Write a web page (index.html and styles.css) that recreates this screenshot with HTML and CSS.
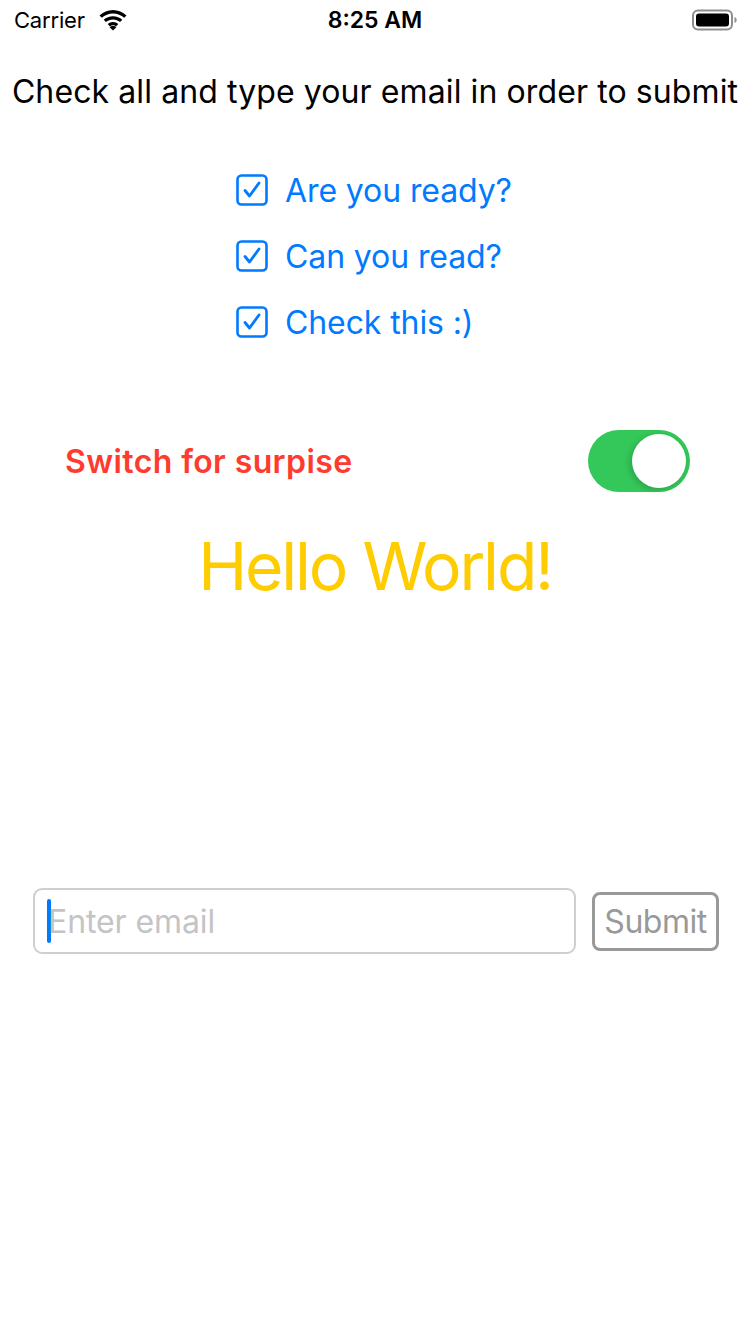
FILE: index.html
```html
<!DOCTYPE html>
<html>
<head>
<meta charset="utf-8">
<link rel="stylesheet" href="styles.css">
</head>
<body>
<div class="screen">
  <div class="status">
    <div class="status-left">
      <span class="carrier">Carrier</span>
      <svg class="wifi" width="30" height="22" viewBox="0 0 30 22">
        <path d="M15 4.5c4.3 0 8.2 1.6 11.2 4.3l2.3-2.4C24.9 3.1 20.2 1 15 1S5.1 3.1 1.5 6.4l2.3 2.4C6.8 6.1 10.7 4.5 15 4.5z" fill="#000"/>
        <path d="M15 10.5c2.7 0 5.1 1 7 2.6l2.3-2.4C21.8 8.5 18.6 7.2 15 7.2s-6.8 1.3-9.3 3.5L8 13.1c1.9-1.6 4.3-2.6 7-2.6z" fill="#000"/>
        <path d="M15 16.3c1.2 0 2.2.4 3 1.1l2.3-2.4c-1.4-1.3-3.3-2-5.3-2s-3.9.7-5.3 2l2.3 2.4c.8-.7 1.8-1.1 3-1.1z" fill="#000"/>
        <path d="M11.6 18.2L15 21.5l3.4-3.3c-.9-.8-2.1-1.3-3.4-1.3s-2.5.5-3.4 1.3z" fill="#000"/>
      </svg>
    </div>
    <div class="time">8:25 AM</div>
    <div class="status-right">
      <svg width="46" height="22" viewBox="0 0 46 22">
        <rect x="1" y="1.5" width="39" height="19" rx="5" fill="none" stroke="#8e8e8e" stroke-width="2"/>
        <rect x="4" y="4.5" width="33" height="13" rx="3" fill="#000"/>
        <path d="M42.5 8v6c1.3-.4 2.2-1.6 2.2-3s-.9-2.6-2.2-3z" fill="#8e8e8e"/>
      </svg>
    </div>
  </div>

  <div class="title">Check all and type your email in order to submit</div>

  <div class="checks">
    <div class="check-row">
      <svg class="box" width="32" height="32" viewBox="0 0 32 32"><rect x="1.5" y="1.5" width="29" height="29" rx="4" fill="none" stroke="#007aff" stroke-width="2.6"/><path d="M9 16.5l4.5 5.5L23 9" fill="none" stroke="#007aff" stroke-width="2.8" stroke-linecap="round" stroke-linejoin="round"/></svg>
      <span class="check-label">Are you ready?</span>
    </div>
    <div class="check-row">
      <svg class="box" width="32" height="32" viewBox="0 0 32 32"><rect x="1.5" y="1.5" width="29" height="29" rx="4" fill="none" stroke="#007aff" stroke-width="2.6"/><path d="M9 16.5l4.5 5.5L23 9" fill="none" stroke="#007aff" stroke-width="2.8" stroke-linecap="round" stroke-linejoin="round"/></svg>
      <span class="check-label">Can you read?</span>
    </div>
    <div class="check-row">
      <svg class="box" width="32" height="32" viewBox="0 0 32 32"><rect x="1.5" y="1.5" width="29" height="29" rx="4" fill="none" stroke="#007aff" stroke-width="2.6"/><path d="M9 16.5l4.5 5.5L23 9" fill="none" stroke="#007aff" stroke-width="2.8" stroke-linecap="round" stroke-linejoin="round"/></svg>
      <span class="check-label">Check this :)</span>
    </div>
  </div>

  <div class="switch-row">
    <span class="switch-label">Switch for surpise</span>
    <div class="switch"><div class="thumb"></div></div>
  </div>

  <div class="hello">Hello World!</div>

  <div class="form">
    <div class="input">
      <span class="cursor"></span>
      <span class="placeholder">Enter email</span>
    </div>
    <div class="submit">Submit</div>
  </div>
</div>
</body>
</html>
```

FILE: styles.css
```css
* { box-sizing: border-box; }
html, body { margin: 0; padding: 0; background: #fff; }
body {
  font-family: Inter, "Liberation Sans", sans-serif;
  width: 750px;
  height: 1334px;
  overflow: hidden;
}
.screen { display: flex; flex-direction: column; }

.status {
  height: 40px;
  display: flex;
  align-items: center;
  justify-content: space-between;
  padding: 0 12px 0 14px;
  position: relative;
}
.status-left { display: flex; align-items: center; gap: 13px; }
.carrier { font-size: 22px; color: #000; letter-spacing: -0.2px; }
.wifi { margin-top: -1px; }
.time {
  position: absolute;
  left: 0; right: 0;
  text-align: center;
  font-size: 23px;
  font-weight: 600;
  color: #000;
  pointer-events: none;
}
.status-right { display: flex; align-items: center; }

.title {
  margin-top: 32px;
  text-align: center;
  font-size: 32px;
  color: #000;
  letter-spacing: 0.1px;
  white-space: nowrap;
  line-height: 40px;
}

.checks {
  margin-top: 62px;
  display: flex;
  flex-direction: column;
  align-items: flex-start;
  gap: 34px;
  padding-left: 236px;
}
.check-row { display: flex; align-items: center; gap: 17px; height: 32px; }
.check-label { font-size: 32px; color: #007aff; letter-spacing: -0.1px; }

.switch-row {
  margin-top: 92px;
  display: flex;
  align-items: center;
  justify-content: space-between;
  padding: 0 60px 0 65px;
}
.switch-label { font-size: 32px; font-weight: 600; color: #ff3b30; letter-spacing: 0.4px; }
.switch {
  width: 102px;
  height: 62px;
  border-radius: 31px;
  background: #34c759;
  display: flex;
  align-items: center;
  justify-content: flex-end;
  padding-right: 4px;
}
.thumb {
  width: 54px;
  height: 54px;
  border-radius: 50%;
  background: #fff;
  box-shadow: -2px 2px 6px rgba(0,0,0,0.18);
}

.hello {
  margin-top: 29px;
  text-align: center;
  font-size: 66px;
  color: #ffcc00;
  line-height: 90px;
  letter-spacing: -2.2px;
}

.form {
  margin-top: 277px;
  display: flex;
  align-items: center;
  padding: 0 31px 0 33px;
  gap: 16px;
}
.input {
  flex: 1;
  height: 66px;
  border: 2px solid #cfcfcf;
  border-radius: 9px;
  display: flex;
  align-items: center;
  padding-left: 12px;
}
.cursor {
  width: 4px;
  height: 44px;
  border-radius: 2px;
  background: #007aff;
}
.placeholder { font-size: 32px; color: #c4c4c6; letter-spacing: -0.1px; margin-left: -3px; }
.submit {
  width: 127px;
  height: 59px;
  border: 3px solid #999;
  border-radius: 8px;
  display: flex;
  align-items: center;
  justify-content: center;
  font-size: 32px;
  color: #999;
  letter-spacing: -0.5px;
}
```
